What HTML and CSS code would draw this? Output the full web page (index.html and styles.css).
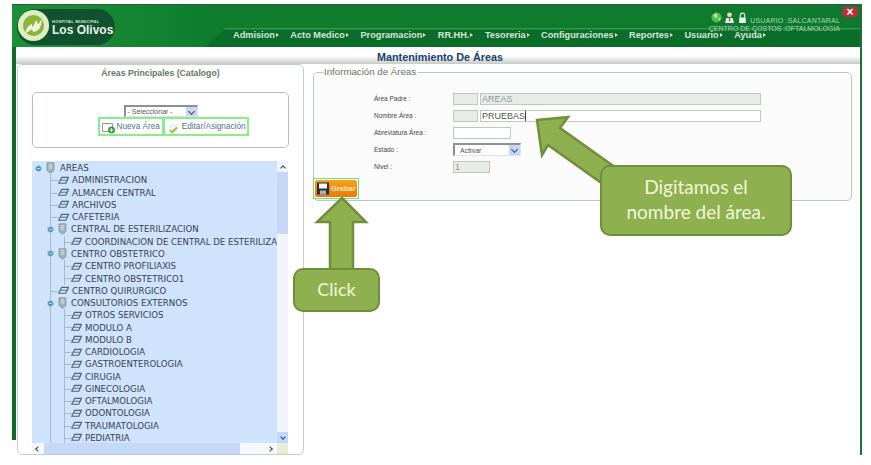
FILE: index.html
```html
<!DOCTYPE html>
<html lang="es">

<head>
    <meta charset="UTF-8">
    <meta name="viewport" content="width=device-width, initial-scale=1.0">
    <title>Mantenimiento De Áreas</title>
    <link rel="stylesheet" href="styles.css">
</head>

<body>
    <svg class="defs" width="0" height="0">
        <symbol id="carpeta" viewBox="0 0 12 9">
            <path d="M4 1h7.500L8.500 7.500H.8z" fill="none" stroke="#4f6672" stroke-width="1.300" />
            <path d="M2.500 4.200h7.500" stroke="#4f6672" stroke-width="1" />
        </symbol>
        <symbol id="expandir" viewBox="0 0 8 8">
            <circle cx="4" cy="4" r="3.200" fill="#3f8fb0" stroke="#9cc4d6" />
            <path d="M2.500 4h3" stroke="#e6f3f8" />
        </symbol>
        <symbol id="nodo" viewBox="0 0 10 14">
            <path d="M1 1h8v9l-4 3-4-3z" fill="#9fb3b8" stroke="#7f959b" />
            <path d="M3 3h4M3 5h4M3 7h4" stroke="#dce6e8" />
        </symbol>
    </svg>

    <div class="app">
        <header class="cabecera">
            <div class="franja"></div>
            <div class="logo">
                <svg class="logo-circulo" viewBox="0 0 36 36">
                    <circle cx="18" cy="18" r="17" fill="#dfeec2" />
                    <circle cx="18" cy="18" r="11.500" fill="#8cb33c" />
                    <path d="M9 27c1-7 4-9 7-11l1 4 4-8 2 5 4-6c0 8-3 14-9 14l-2-3z" fill="#eef6d8" />
                </svg>
                <div class="logo-texto">
                    <span class="logo-sub">HOSPITAL MUNICIPAL</span>
                    <span class="logo-nombre">Los Olivos</span>
                </div>
            </div>
            <nav class="menu">
                <a>Admision</a>
                <a>Acto Medico</a>
                <a>Programacion</a>
                <a>RR.HH.</a>
                <a>Tesoreria</a>
                <a>Configuraciones</a>
                <a>Reportes</a>
                <a>Usuario</a>
                <a class="ayuda">Ayuda</a>
            </nav>
            <div class="usuario">
                <div class="usuario-fila">
                    <svg class="ico-top" viewBox="0 0 10 10">
                        <circle cx="5" cy="5" r="4.600" fill="#4fbf4a" />
                        <path d="M2 3l3-2 1 3-2 2zM6 6l3-1-1 3z" fill="#bfe8a0" />
                    </svg>
                    <svg class="ico-top" viewBox="0 0 10 10">
                        <circle cx="5" cy="2.600" r="2.200" fill="#f0d8b0" />
                        <path d="M1 10l1-4.500h6l1 4.500z" fill="#e8e8e8" />
                        <path d="M4.400 5.500h1.200v3h-1.200z" fill="#c84a3a" />
                    </svg>
                    <svg class="ico-top" viewBox="0 0 10 10">
                        <path d="M3 5V3a2 2 0 0 1 4 0v2" fill="none" stroke="#e8f0e8" />
                        <path d="M2 5h6v5h-6z" fill="#f2f5f2" />
                    </svg>
                    <span class="usuario-nombre">USUARIO :SALCANTARAL</span>
                </div>
                <div>CENTRO DE COSTOS :OFTALMOLOGIA</div>
            </div>
            <button class="cerrar">×</button>
        </header>

        <h1 class="titulo">Mantenimiento De Áreas</h1>

        <main class="contenido">
            <section class="catalogo">
                <h2>Áreas Principales (Catalogo)</h2>
                <div class="filtro">
                    <div class="combo combo-chico">
                        <span>- Seleccionar -</span>
                        <i class="combo-flecha"></i>
                    </div>
                    <div class="acciones">
                        <a class="accion">
                            <svg class="ico-accion" viewBox="0 0 14 12">
                                <path d="M.5 1.500h10v8h-10z" fill="#fff" stroke="#8a9a9a" />
                                <circle cx="9.500" cy="8" r="3.500" fill="#3c9a3c" />
                                <path d="M7.500 8h4M9.500 6v4" stroke="#d6f0d0" stroke-width="1.200" />
                            </svg>
                            Nueva Área
                        </a>
                        <a class="accion">
                            <svg class="ico-accion" viewBox="0 0 14 12">
                                <path d="M2 2h9v8h-9z" fill="#f1f3ee" />
                                <path d="M3 8l2 2.500 5-5" fill="none" stroke="#9ebf3a" stroke-width="2" />
                            </svg>
                            Editar/Asignación
                        </a>
                    </div>
                </div>

                <div class="arbol-marco">
                    <div class="arbol-vista">
                        <ul class="arbol" id="arbol"></ul>
                    </div>
                    <div class="barra-v">
                        <span class="boton-v"><i class="chevron arriba"></i></span>
                        <span class="barra-v-pulgar"></span>
                        <span class="boton-v boton-abajo"><i class="chevron abajo"></i></span>
                    </div>
                    <div class="barra-h">
                        <span class="boton-h"><i class="chevron izq"></i></span>
                        <span class="barra-h-pulgar"></span>
                        <span class="boton-h boton-der"><i class="chevron der"></i></span>
                    </div>
                    <div class="barra-esquina"></div>
                </div>
            </section>

            <section class="detalle">
                <fieldset class="info">
                    <legend>Información de Áreas</legend>
                    <div class="form">
                        <label>Área Padre :</label>
                        <div class="campos">
                            <input class="txt txt-cod off" disabled>
                            <input class="txt txt-largo off" value="AREAS" disabled>
                        </div>
                        <label>Nombre Área :</label>
                        <div class="campos">
                            <input class="txt txt-cod off" disabled>
                            <div class="txt txt-largo activo">PRUEBAS<i class="cursor"></i></div>
                        </div>
                        <label>Abreviatura Área :</label>
                        <div class="campos">
                            <input class="txt txt-abrev">
                        </div>
                        <label>Estado :</label>
                        <div class="campos">
                            <div class="combo combo-estado">
                                <span>Activar</span>
                                <i class="combo-flecha"></i>
                            </div>
                        </div>
                        <label>Nivel :</label>
                        <div class="campos">
                            <input class="txt txt-nivel off" value="1" disabled>
                        </div>
                    </div>
                    <div class="grabar-marco">
                        <button class="grabar">
                            <svg class="ico-grabar" viewBox="0 0 12 12">
                                <path d="M0 0h12v12h-12z" fill="#27303a" />
                                <path d="M2 1h8v5h-8z" fill="#f3f5f7" />
                                <path d="M3 8h6v4h-6z" fill="#a8b2bc" />
                            </svg>
                            Grabar
                        </button>
                    </div>
                </fieldset>
            </section>
        </main>

        <!-- Flechas y globos del tutorial -->
        <svg class="flecha-tuto flecha-nombre" viewBox="530 112 95 80">
            <path d="M537 120L568 117 560 128 619 170 607 187 548 145 542 155z" fill="#8eb04f" stroke="#6f8f3c" stroke-width="2.500" />
        </svg>
        <svg class="flecha-tuto flecha-click" viewBox="312 195 60 78">
            <path d="M342 198L366 222H353V270H330V222H317z" fill="#8eb04f" stroke="#6f8f3c" stroke-width="2.500" />
        </svg>
        <div class="globo globo-nombre">Digitamos el<br>nombre del área.</div>
        <div class="globo globo-click">Click</div>
    </div>

    <script>
        // nivel, tipo (n = nodo, h = hoja), texto
        let filas = [
            [0, "n", "AREAS"],
            [1, "h", "ADMINISTRACION"],
            [1, "h", "ALMACEN CENTRAL"],
            [1, "h", "ARCHIVOS"],
            [1, "h", "CAFETERIA"],
            [1, "n", "CENTRAL DE ESTERILIZACION"],
            [2, "h", "COORDINACION DE CENTRAL DE ESTERILIZACION"],
            [1, "n", "CENTRO OBSTETRICO"],
            [2, "h", "CENTRO PROFILIAXIS"],
            [2, "h", "CENTRO OBSTETRICO1"],
            [1, "h", "CENTRO QUIRURGICO"],
            [1, "n", "CONSULTORIOS EXTERNOS"],
            [2, "h", "OTROS SERVICIOS"],
            [2, "h", "MODULO A"],
            [2, "h", "MODULO B"],
            [2, "h", "CARDIOLOGIA"],
            [2, "h", "GASTROENTEROLOGIA"],
            [2, "h", "CIRUGIA"],
            [2, "h", "GINECOLOGIA"],
            [2, "h", "OFTALMOLOGIA"],
            [2, "h", "ODONTOLOGIA"],
            [2, "h", "TRAUMATOLOGIA"],
            [2, "h", "PEDIATRIA"]
        ];

        let arbol = document.getElementById("arbol");
        filas.forEach(fila => {
            let li = document.createElement("li");
            li.className = "fila nivel-" + fila[0];
            if (fila[1] == "n") {
                li.innerHTML = '<svg class="ico-exp"><use href="#expandir"/></svg><svg class="ico-nodo"><use href="#nodo"/></svg>';
            } else {
                li.innerHTML = '<i class="rama"></i><svg class="ico-hoja"><use href="#carpeta"/></svg>';
            }
            let texto = document.createElement("span");
            texto.textContent = fila[2];
            li.appendChild(texto);
            arbol.appendChild(li);
        });
    </script>
</body>

</html>
```

FILE: styles.css
```css
* {
    box-sizing: border-box;
}

html,
body {
    height: 100%;
}

body {
    margin: 0;
    background: #fff;
    font-family: "Liberation Sans", Arial, sans-serif;
    overflow: hidden;
    padding: 4px 9px 0 12px;
}

.defs {
    display: block;
    height: 0;
}

.app {
    position: relative;
    height: 451px;
    background: #fff;
    border-right: 2px solid #1f7038;
    display: flex;
    flex-direction: column;
}

.app::before {
    content: "";
    position: absolute;
    left: 0;
    top: 40px;
    width: 4px;
    height: 396px;
    background: #0e6a2c;
}

/* Cabecera */
.cabecera {
    position: relative;
    height: 43px;
    flex: none;
    background: linear-gradient(to right, #1c9038 0, #0f7c2e 200px, #0d7a2e 100%);
    border-top: 1px solid #2b5a3c;
    padding-left: 5px;
    display: flex;
}

.franja {
    position: absolute;
    left: 193px;
    right: 0;
    top: 23px;
    bottom: 0;
    background: linear-gradient(to bottom, #2c9a4a 0, #2c9a4a 1px, #0a6e2a 2px, #0a6e2a 100%);
    clip-path: polygon(20px 0, 100% 0, 100% 100%, 0 100%);
}

.logo {
    position: relative;
    width: 98px;
    height: 36px;
    margin-top: 4px;
    border-radius: 18px;
    background: #10512f;
    display: flex;
    align-items: center;
    gap: 2px;
}

.logo-circulo {
    width: 33px;
    height: 33px;
    flex: none;
    margin-top: -3px;
}

.logo-texto {
    display: flex;
    flex-direction: column;
    color: #fff;
    margin-top: 1px;
}

.logo-sub {
    font-size: 4px;
    font-weight: bold;
    line-height: 5px;
    white-space: nowrap;
    letter-spacing: .25px;
    color: #d8e8d8;
}

.logo-nombre {
    font-size: 12px;
    font-weight: bold;
    line-height: 13px;
    color: #e8f0ea;
    white-space: nowrap;
}

.menu {
    position: absolute;
    left: 221px;
    top: 23px;
    display: flex;
    gap: 11.500px;
    font-size: 9.200px;
    font-weight: bold;
    line-height: 14px;
    color: #d5e6d5;
    white-space: nowrap;
}

.menu a {
    display: flex;
    align-items: center;
}

.menu a::after {
    content: "";
    margin-left: 1px;
    border-left: 3px solid #d5e6d5;
    border-top: 2px solid transparent;
    border-bottom: 2px solid transparent;
}

.menu .ayuda {
    margin-top: -1px;
}

.usuario {
    position: absolute;
    right: 20px;
    top: 7px;
    font-size: 7px;
    line-height: 8px;
    color: #b6d3ba;
    text-align: right;
    white-space: nowrap;
}

.usuario-fila {
    display: flex;
    justify-content: flex-end;
    align-items: flex-end;
    gap: 2px;
}

.usuario-nombre {
    letter-spacing: .2px;
}

.ico-top {
    width: 11px;
    height: 11px;
    margin-bottom: 2px;
}

.cerrar {
    position: absolute;
    right: 2px;
    top: 2px;
    width: 16px;
    height: 10px;
    border: none;
    border-radius: 3px;
    padding: 0;
    background: #b53140;
    color: #fff;
    font-size: 12px;
    font-weight: bold;
    line-height: 9px;
}

/* Titulo */
.titulo {
    margin: 0 0 0 4px;
    height: 17px;
    flex: none;
    padding-left: 4px;
    background: linear-gradient(to bottom, #fff 0, #fff 9px, #d4d6d4 15px, #c9cbc9 17px);
    font-size: 10.800px;
    line-height: 20px;
    text-align: center;
    color: #17406f;
}

.contenido {
    flex: 1;
    min-height: 0;
    display: flex;
    padding-left: 5px;
}

/* Panel izquierdo */
.catalogo {
    width: 287px;
    flex: none;
    border: 1px solid #c3d0c3;
    border-radius: 5px;
    display: flex;
    flex-direction: column;
    padding: 0 14px;
}

.catalogo h2 {
    margin: 2px 0 0;
    font-size: 8.700px;
    line-height: 12px;
    text-align: center;
    color: #65785c;
}

.filtro {
    height: 56px;
    margin-top: 13px;
    border: 1px solid #b8c4b8;
    border-radius: 5px;
    display: flex;
    flex-direction: column;
    align-items: center;
    padding-top: 12px;
}

.combo {
    display: flex;
    align-items: center;
    justify-content: space-between;
    border-top: 2px solid #8b9197;
    border-left: 2px solid #8b9197;
    border-bottom: 1px solid #e0e3e6;
    border-right: 1px solid #e0e3e6;
    background: #fff;
    color: #555;
    font-size: 7px;
}

.combo-chico {
    width: 74px;
    height: 12px;
    padding-left: 2px;
}

.combo-flecha {
    width: 11px;
    height: 100%;
    background: #c8d8f4;
    position: relative;
}

.combo-flecha::after {
    content: "";
    position: absolute;
    left: 3px;
    top: 2px;
    width: 4px;
    height: 4px;
    border-right: 1.500px solid #2a4a90;
    border-bottom: 1.500px solid #2a4a90;
    transform: rotate(45deg);
}

.acciones {
    display: flex;
    margin-left: 26px;
}

.accion {
    display: flex;
    align-items: center;
    gap: 1px;
    height: 19px;
    padding: 0 2px;
    border: 2px solid #8cec8c;
    font-size: 8.200px;
    color: #566f86;
    white-space: nowrap;
}

.accion + .accion {
    border-left-width: 1px;
}

.ico-accion {
    width: 14px;
    height: 12px;
    margin-top: 2px;
    flex: none;
}

.arbol-marco {
    position: relative;
    margin-top: 13px;
    flex: 1;
    min-height: 0;
    display: grid;
    grid-template-columns: 245px 11px;
    grid-template-rows: 1fr 11px;
}

.arbol-vista {
    background: #cfe3fc;
    overflow: hidden;
    min-height: 0;
    padding-top: 1px;
}

.arbol {
    list-style: none;
    margin: 0;
    padding: 0;
}

.fila {
    display: flex;
    align-items: center;
    position: relative;
    height: 12.270px;
    font-family: "DejaVu Sans", Verdana, sans-serif;
    font-size: 8.600px;
    color: #38414f;
    white-space: nowrap;
}

/* lineas verticales del arbol */
.nivel-0 {
    padding-left: 3px;
}

.nivel-1 {
    padding-left: 15px;
    background: linear-gradient(#a9b9c9, #a9b9c9) 18px 0 / 1px 100% no-repeat;
}

.nivel-2 {
    padding-left: 28px;
    background:
        linear-gradient(#a9b9c9, #a9b9c9) 18px 0 / 1px 100% no-repeat,
        linear-gradient(#a9b9c9, #a9b9c9) 32px 0 / 1px 100% no-repeat;
}

.nivel-0 .ico-nodo {
    margin-right: 5px;
}

.fila .rama {
    position: absolute;
    top: 6px;
    width: 7px;
    height: 1px;
    background: #a9b9c9;
}

.nivel-1 .rama {
    left: 19px;
}

.nivel-2 .rama {
    left: 33px;
}

.ico-exp {
    width: 7px;
    height: 7px;
    margin-right: 4px;
    flex: none;
}

.ico-nodo {
    width: 9px;
    height: 12px;
    margin-right: 4px;
    flex: none;
}

.ico-hoja {
    width: 11px;
    height: 9px;
    margin-right: 3px;
    margin-left: 11px;
    flex: none;
}

.barra-v {
    background: #f1f5f9;
    display: flex;
    flex-direction: column;
}

.boton-v {
    height: 11px;
    flex: none;
    position: relative;
}

.boton-abajo {
    margin-top: auto;
    background: #c3d8f8;
}

.barra-v-pulgar {
    height: 62px;
    background: #c6d8f7;
}

.barra-h {
    background: #f6f8fb;
    display: flex;
}

.boton-h {
    width: 12px;
    flex: none;
    position: relative;
}

.boton-der {
    margin-left: auto;
}

.barra-h-pulgar {
    width: 196px;
    background: #c6d8f7;
}

.chevron {
    position: absolute;
    left: 4px;
    top: 4px;
    width: 4px;
    height: 4px;
    border-top: 1.500px solid #2a4a70;
    border-left: 1.500px solid #2a4a70;
}

.chevron.arriba {
    transform: rotate(45deg);
    left: 3.500px;
    top: 4.500px;
}

.chevron.abajo {
    transform: rotate(225deg);
    left: 3.500px;
    top: 2.500px;
}

.chevron.izq {
    transform: rotate(-45deg);
}

.chevron.der {
    transform: rotate(135deg);
    left: 3px;
}

.barra-esquina {
    background: #ecebd8;
}

/* Panel derecho */
.detalle {
    flex: 1;
    padding: 0 8px 0 9px;
}

.info {
    position: relative;
    margin: 2px 0 0;
    padding: 0;
    height: 135px;
    border: 1px solid #b8cbb8;
    border-radius: 5px;
    background: #fbfbfb;
}

.info legend {
    margin-left: 9px;
    padding: 0 2px 0 1px;
    font-size: 9.700px;
    line-height: 12px;
    color: #65785c;
}

.form {
    display: grid;
    grid-template-columns: 79px 1fr;
    grid-auto-rows: 17px;
    padding: 12px 0 0 60px;
    align-items: center;
}

.form label {
    font-size: 6.500px;
    color: #445;
    white-space: nowrap;
}

.campos {
    display: flex;
    align-items: center;
    gap: 2px;
}

.txt {
    height: 12px;
    padding: 0 1px;
    border: 1px solid #bccabc;
    background: #fff;
    font-family: "Liberation Sans", Arial, sans-serif;
    font-size: 9px;
    line-height: 10px;
    color: #555;
    display: block;
}

.txt.off {
    background: #e8ebe8;
    color: #8d9aa0;
}

.txt-cod {
    width: 25px;
}

.txt-largo {
    width: 281px;
}

.txt-abrev {
    width: 58px;
}

.txt-nivel {
    width: 37px;
}

.cursor {
    display: inline-block;
    width: 1px;
    height: 10px;
    background: #444;
    vertical-align: top;
}

.combo-estado {
    width: 68px;
    height: 13px;
    padding-left: 5px;
}

.grabar-marco {
    position: absolute;
    left: -1px;
    top: 100px;
    height: 21px;
    padding: 1px;
    border: 1px solid #74e074;
}

.grabar {
    display: flex;
    align-items: center;
    gap: 2px;
    height: 17px;
    width: 42px;
    padding: 0 0 0 2px;
    border: none;
    border-radius: 2px;
    background: linear-gradient(to bottom, #f5a31c, #e8780a);
    color: #f8e8b8;
    font-family: "Liberation Sans", Arial, sans-serif;
    font-size: 7.500px;
    font-weight: bold;
}

.ico-grabar {
    width: 12px;
    height: 13px;
    flex: none;
}

/* Tutorial */
.flecha-tuto {
    position: absolute;
}

.flecha-nombre {
    left: 518px;
    top: 108px;
    width: 95px;
    height: 80px;
}

.flecha-click {
    left: 300px;
    top: 191px;
    width: 60px;
    height: 78px;
}

.globo {
    position: absolute;
    display: flex;
    align-items: center;
    justify-content: center;
    text-align: center;
    background: #8eb04f;
    border: 2.500px solid #6f8f3c;
    border-radius: 10px;
    font-family: Lato, "Open Sans", sans-serif;
    color: #f2f7dc;
}

.globo-nombre {
    left: 588px;
    top: 161px;
    width: 192px;
    height: 71px;
    padding-bottom: 3px;
    font-size: 19px;
    line-height: 25px;
}

.globo-click {
    left: 281px;
    top: 264px;
    width: 87px;
    height: 44px;
    padding-bottom: 3px;
    font-size: 18px;
}
```
